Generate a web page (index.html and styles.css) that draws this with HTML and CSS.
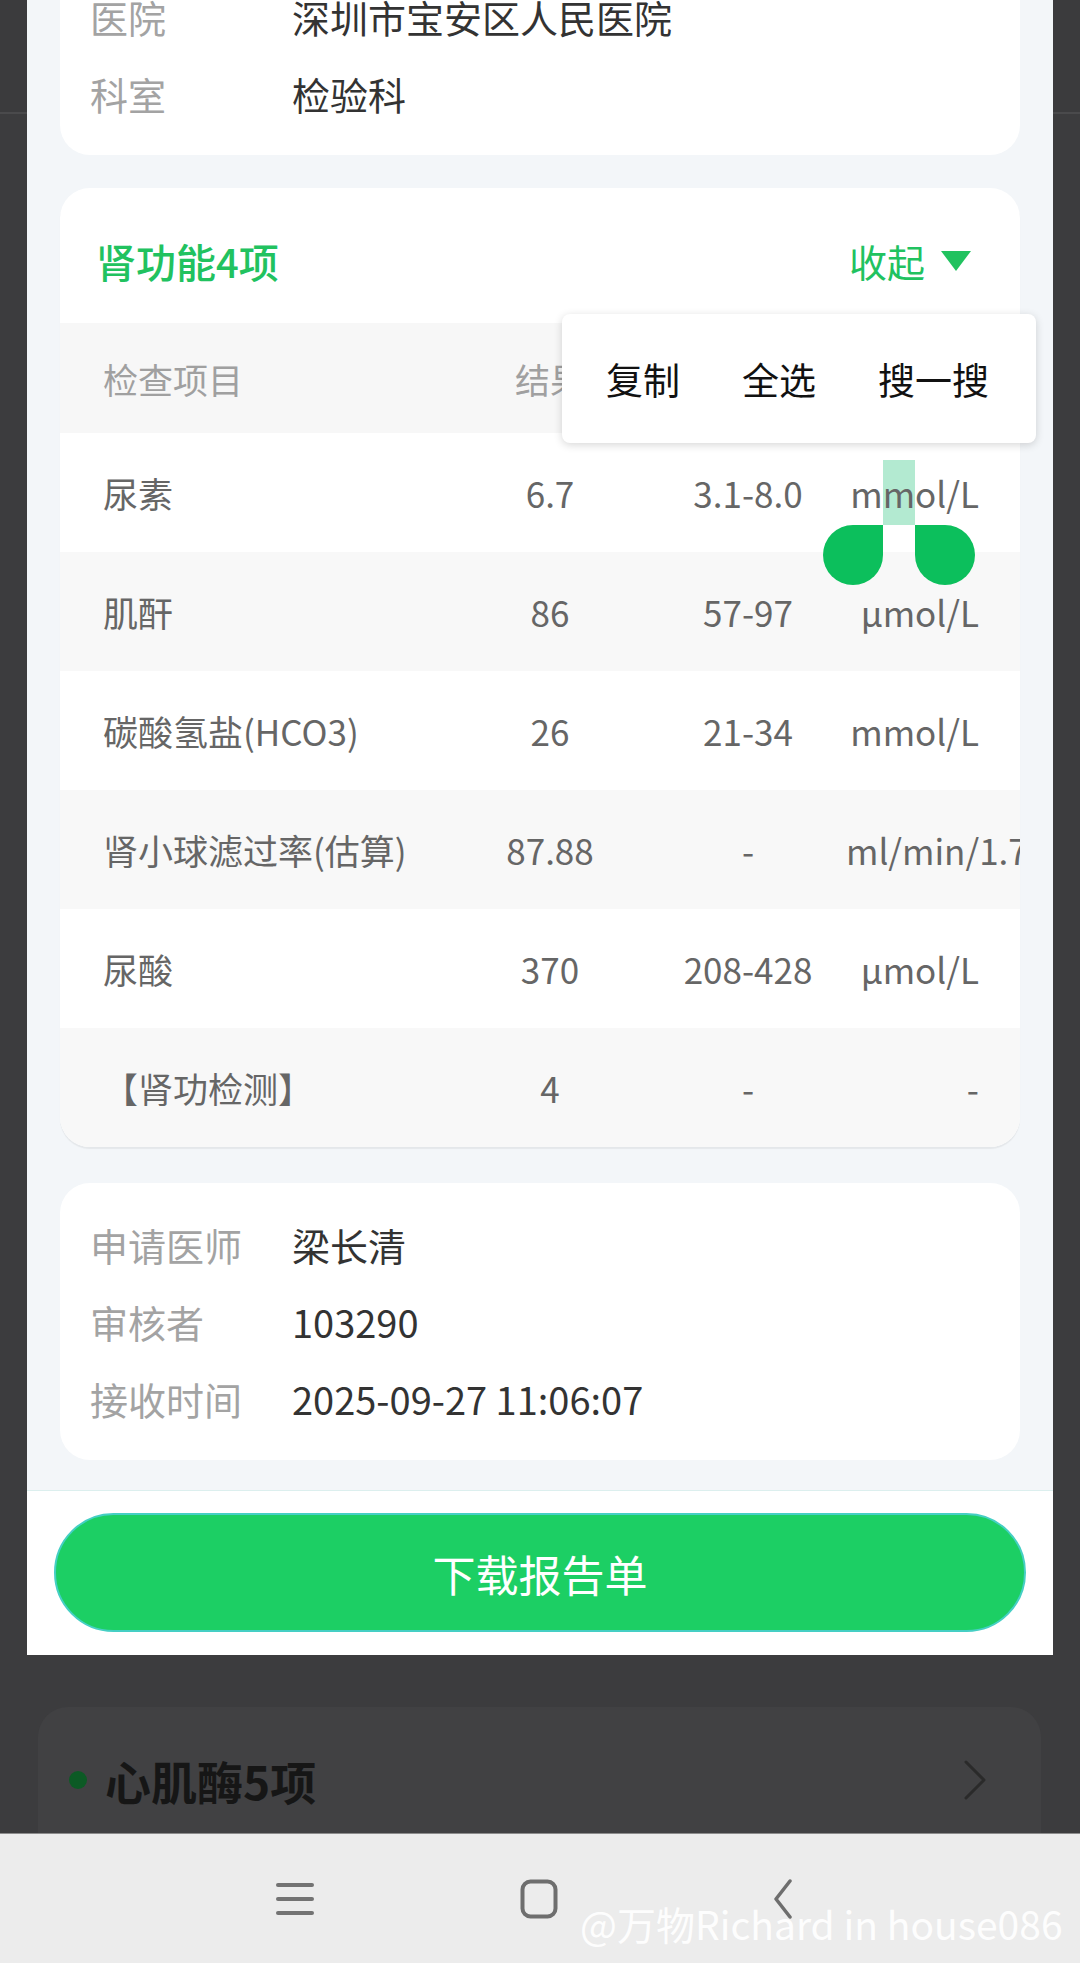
FILE: index.html
```html
<!DOCTYPE html>
<html lang="zh-CN">
<head>
    <meta charset="UTF-8">
    <title>报告详情</title>
    <link rel="stylesheet" href="styles.css">
</head>
<body>
<div class="screen">
    <div class="sheet">
        <div class="sheet-body">
            <div class="scroll">
                <div class="card info">
                    <div class="info-row"><span class="label">医院</span><span class="value">深圳市宝安区人民医院</span></div>
                    <div class="info-row"><span class="label">科室</span><span class="value">检验科</span></div>
                </div>

                <div class="card group">
                    <div class="group-head">
                        <span class="group-title">肾功能4项</span>
                        <span class="toggle">收起<i class="caret"></i></span>
                    </div>
                    <div class="tbl">
                        <div class="tr th"><span>检查项目</span><span>结果</span><span>参考范围</span><span>单位</span></div>
                        <div class="tr"><span>尿素</span><span>6.7</span><span>3.1-8.0</span><span>m<span class="sel">m</span>ol/L</span></div>
                        <div class="tr"><span>肌酐</span><span>86</span><span>57-97</span><span>μmol/L</span></div>
                        <div class="tr"><span>碳酸氢盐(HCO3)</span><span>26</span><span>21-34</span><span>mmol/L</span></div>
                        <div class="tr"><span>肾小球滤过率(估算)</span><span>87.88</span><span>-</span><span>ml/min/1.73m²</span></div>
                        <div class="tr"><span>尿酸</span><span>370</span><span>208-428</span><span>μmol/L</span></div>
                        <div class="tr"><span>【肾功检测】</span><span>4</span><span>-</span><span>-</span></div>
                    </div>
                </div>

                <div class="card info">
                    <div class="info-row"><span class="label">申请医师</span><span class="value">梁长清</span></div>
                    <div class="info-row"><span class="label">审核者</span><span class="value">103290</span></div>
                    <div class="info-row"><span class="label">接收时间</span><span class="value">2025-09-27 11:06:07</span></div>
                </div>
            </div>
        </div>
        <div class="sheet-foot">
            <button class="btn-download">下载报告单</button>
        </div>
    </div>

    <!-- 弹层下方被遮住的列表 -->
    <div class="under">
        <div class="dim-card">
            <div class="dim-row">
                <i class="dot"></i>
                <span class="dim-title">心肌酶5项</span>
                <svg class="chev" width="26" height="40" viewBox="0 0 26 40"><path d="M4 2 L22 20 L4 38" fill="none" stroke="#2a2a2a" stroke-width="3" stroke-linecap="round" stroke-linejoin="round"/></svg>
            </div>
        </div>
    </div>

    <nav class="navbar">
        <div class="nav-slot">
            <svg width="40" height="36" viewBox="0 0 40 36"><g stroke="#737373" stroke-width="4" stroke-linecap="round"><path d="M3 4 H37"/><path d="M3 18 H37"/><path d="M3 32 H37"/></g></svg>
        </div>
        <div class="nav-slot">
            <svg width="38" height="40" viewBox="0 0 38 40"><rect x="2.5" y="2.5" width="33" height="35" rx="8" fill="none" stroke="#6e6e6e" stroke-width="4"/></svg>
        </div>
        <div class="nav-slot">
            <svg width="22" height="40" viewBox="0 0 22 40"><path d="M18 2 L4 20 L18 38" fill="none" stroke="#6e6e6e" stroke-width="3.5" stroke-linecap="round" stroke-linejoin="round"/></svg>
        </div>
    </nav>

    <!-- 文本选择菜单 -->
    <div class="popup">
        <span>复制</span>
        <span>全选</span>
        <span>搜一搜</span>
    </div>

    <div class="watermark">@万物Richard in house086</div>
</div>
</body>
</html>
```

FILE: styles.css
```css
*{
    box-sizing: border-box;
}
body{
    margin: 0;
    width: 1080px;
    height: 1963px;
    overflow: hidden;
    font-family: "Noto Sans CJK SC", sans-serif;
    background: linear-gradient(#3b3b3d 0, #3b3b3d 112px, #4a4a4c 112px, #4a4a4c 114px, #3c3c3e 114px);
}
.screen{
    position: relative;
    height: 1963px;
    display: flex;
    flex-direction: column;
}

/* 底部弹出的报告单 */
.sheet{
    margin: 0 27px;
    height: 1655px;
    background: #f3f6f9;
    display: flex;
    flex-direction: column;
}
.sheet-body{
    flex: 1;
    overflow: hidden;
    padding: 0 33px;
}
.scroll{
    margin-top: -45px;
}
.card{
    background: #fff;
    border-radius: 30px;
}
.info{
    padding: 23px 30px;
}
.info-row{
    display: flex;
    height: 77px;
    line-height: 77px;
    font-size: 38px;
}
.info-row .label{
    width: 202px;
    color: #a3a3a3;
}
.info-row .value{
    color: #333;
}

.group{
    margin: 33px 0 36px;
    overflow: hidden;
    box-shadow: 0 2px 1px rgba(0,0,0,.06);
}
.group-head{
    height: 135px;
    padding: 50px 49px 0 36px;
    display: flex;
    align-items: flex-start;
    justify-content: space-between;
    line-height: 46px;
    color: #21c25f;
}
.group-title{
    font-size: 40px;
    font-weight: 500;
}
.toggle{
    height: 46px;
    font-size: 38px;
    display: flex;
    align-items: center;
}
.caret{
    margin-left: 16px;
    border-left: 15px solid transparent;
    border-right: 15px solid transparent;
    border-top: 20px solid #21c25f;
}

.tr{
    display: grid;
    grid-template-columns: 347px 200px 196px 133px;
    padding-left: 43px;
    height: 119px;
    align-items: center;
    font-size: 35px;
    color: #666;
    white-space: nowrap;
}
.tr:nth-child(odd){
    background: #f8f8f8;
}
.tr.th{
    height: 110px;
    color: #a0a0a0;
    background: #f7f7f7;
}
.tr > span:nth-child(2),
.tr > span:nth-child(3){
    text-align: center;
}
.tr > span:nth-child(4){
    text-align: right;
}

/* 选中的文字和两个拖动柄 */
.sel{
    position: relative;
    background: #b3ead1;
    padding: 7px 0;
}
.sel:before,
.sel:after{
    content: "";
    position: absolute;
    top: 100%;
    width: 60px;
    height: 60px;
    background: #0cbf5c;
}
.sel:before{
    right: 100%;
    border-radius: 50% 0 50% 50%;
}
.sel:after{
    left: 100%;
    border-radius: 0 50% 50% 50%;
}

.sheet-foot{
    background: #fff;
    border-top: 1px solid #dcefee;
    padding: 22px 27px 23px;
}
.btn-download{
    display: block;
    width: 100%;
    height: 119px;
    border-radius: 60px;
    background: #1ccf64;
    border: 2px solid #45cfc4;
    color: #fff;
    font-family: "Noto Sans CJK SC", sans-serif;
    font-size: 43px;
}

.under{
    height: 178px;
    overflow: hidden;
    padding: 52px 39px 0 38px;
}
.dim-card{
    height: 200px;
    background: #414143;
    border-radius: 30px;
    padding: 50px 53px 0 31px;
}
.dim-row{
    display: flex;
    align-items: center;
    height: 46px;
}
.dot{
    width: 18px;
    height: 18px;
    border-radius: 50%;
    background: #0c5a25;
    margin-right: 18px;
}
.dim-title{
    flex: 1;
    font-size: 46px;
    font-weight: 700;
    color: #161616;
}

.navbar{
    height: 130px;
    background: #ececec;
    border-top: 1px solid #8c8c8c;
    display: flex;
    align-items: center;
    padding-left: 173px;
}
.nav-slot{
    width: 244px;
    display: flex;
    justify-content: center;
}

.popup{
    position: absolute;
    left: 562px;
    top: 314px;
    width: 474px;
    height: 129px;
    padding: 0 44px;
    display: flex;
    align-items: center;
    gap: 62px;
    background: #fff;
    border-radius: 8px;
    box-shadow: 0 2px 8px rgba(0,0,0,.16);
    font-size: 37px;
    color: #111;
}

.watermark{
    position: absolute;
    left: 580px;
    top: 1901px;
    font-size: 39px;
    line-height: 44px;
    color: rgba(255,255,255,.92);
    white-space: nowrap;
}
```
